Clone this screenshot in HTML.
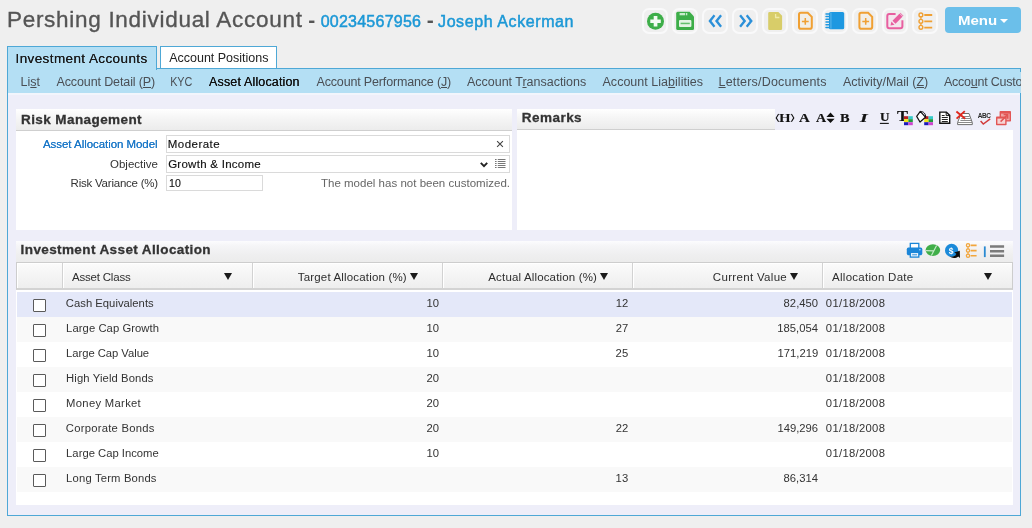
<!DOCTYPE html>
<html lang="en">
<head>
<meta charset="utf-8">
<title>Pershing Individual Account</title>
<style>
*{box-sizing:border-box;margin:0;padding:0}
html,body{width:1032px;height:528px;overflow:hidden}
body{background:#efefef;font-family:"Liberation Sans",sans-serif;font-size:12px;color:#333;position:relative}
.a,.t,svg{position:absolute}
.t{white-space:nowrap}
.t u{text-decoration:underline;text-underline-offset:1px}
.tb{position:absolute;top:7.7px;width:25.6px;height:26px;border:2px solid #f9f9fa;border-radius:7px;margin-left:0.2px}
.hd{background:linear-gradient(#ffffff,#f6f6f6 40%,#ececec);border-bottom:1px solid #cfcfcf}
.inp{border:1px solid #dadada;background:#fff}
.tri{position:absolute;width:0;height:0;border-left:4.5px solid transparent;border-right:4.5px solid transparent;border-top:7.5px solid #1a1a1a}
.cb{position:absolute;left:33px;width:13px;height:13px;border:1px solid #5a5a5a;background:#fff;border-radius:1px}
.sep{position:absolute;top:263px;width:1px;height:25px;background:#d2d2d2;box-shadow:1px 0 0 #fff}
</style>
</head>
<body><div id="wrap" style="position:absolute;left:0;top:0;width:1032px;height:528px;will-change:transform">
<!-- toolbar buttons -->
<div class="tb" style="left:642px"></div><div class="tb" style="left:672px"></div><div class="tb" style="left:702px"></div><div class="tb" style="left:732px"></div><div class="tb" style="left:762px"></div><div class="tb" style="left:792px"></div><div class="tb" style="left:822px"></div><div class="tb" style="left:852px"></div><div class="tb" style="left:882px"></div><div class="tb" style="left:912px"></div>
<div class="a" style="left:945px;top:7px;width:76px;height:26px;background:#6bbfea;border-radius:4px"></div>
<div class="a" style="left:1000px;top:19px;width:0;height:0;border-left:4.2px solid transparent;border-right:4.2px solid transparent;border-top:4.5px solid #fff"></div>

<!-- tabs + nav -->
<div class="a" style="left:7px;top:68px;width:1014px;height:25px;background:#b4dff4;border:1px solid #4ea8d6;border-bottom:0"></div>
<div class="a" style="left:7px;top:46px;width:150px;height:24px;background:#b4dff4;border:1px solid #4ea8d6;border-bottom:0"></div>
<div class="a" style="left:160px;top:46px;width:117px;height:22px;background:#fff;border:1px solid #4ea8d6;border-bottom:0"></div>
<!-- main container -->
<div class="a" style="left:7px;top:93px;width:1014px;height:423px;background:#eeeef9;border:1px solid #4ea8d6;border-top:0"></div>

<!-- Risk Management -->
<div class="a hd" style="left:16px;top:108.6px;width:496px;height:22.4px"></div>
<div class="a" style="left:16px;top:131px;width:496px;height:99px;background:#fff"></div>
<div class="a inp" style="left:166px;top:135px;width:344px;height:18px"></div>
<div class="a inp" style="left:166px;top:155px;width:344px;height:18px"></div>
<div class="a inp" style="left:166px;top:175px;width:97px;height:16px"></div>
<svg style="left:496px;top:140px" width="8" height="8" viewBox="0 0 8 8"><path d="M1.1 1.1L6.9 6.9M6.9 1.1L1.1 6.9" stroke="#444" stroke-width="1.1" fill="none"/></svg>
<svg style="left:480px;top:162px" width="8" height="6" viewBox="0 0 8 6"><path d="M0.8 0.9L4 4.2L7.2 0.9" stroke="#222" stroke-width="1.9" fill="none"/></svg>
<svg style="left:495px;top:159px" width="11" height="9" viewBox="0 0 11 9"><path d="M0 .5h1.6M0 2.5h1.6M0 4.5h1.6M0 6.5h1.6M0 8.5h1.6M2.8 .5H10.5M2.8 2.5H10.5M2.8 4.5H10.5M2.8 6.5H10.5M2.8 8.5H10.5" stroke="#777" stroke-width="1" fill="none"/></svg>

<!-- Remarks -->
<div class="a hd" style="left:517px;top:108.6px;width:258px;height:21.4px"></div>
<div class="a" style="left:517px;top:130px;width:496px;height:100px;background:#fff"></div>

<!-- Investment Asset Allocation -->
<div class="a" style="left:16px;top:241px;width:997px;height:22px;background:linear-gradient(#fcfcfe,#f5f5f7 22%,#efeff0 60%,#ebebeb)"></div>
<div class="a" style="left:16px;top:262px;width:997px;height:243px;background:#fff"></div>
<div class="a" style="left:16px;top:262px;width:997px;height:28px;background:linear-gradient(#fbfbfb,#eeeeee);border:1px solid #cdcdcd;border-bottom:2px solid #d3d3d3;box-shadow:inset 1px 1px 0 #fff"></div>
<div class="sep" style="left:62px"></div><div class="sep" style="left:252px"></div><div class="sep" style="left:442px"></div><div class="sep" style="left:632px"></div><div class="sep" style="left:822px"></div>
<div class="tri" style="left:224px;top:273px"></div><div class="tri" style="left:410px;top:273px"></div><div class="tri" style="left:600px;top:273px"></div><div class="tri" style="left:790px;top:273px"></div><div class="tri" style="left:984px;top:273px"></div>
<!-- rows -->
<div class="a" style="left:17px;top:292px;width:995px;height:25px;background:#e4e8f9"></div>
<div class="a" style="left:17px;top:317px;width:995px;height:25px;background:#f9f9f9"></div>
<div class="a" style="left:17px;top:367px;width:995px;height:25px;background:#f9f9f9"></div>
<div class="a" style="left:17px;top:417px;width:995px;height:25px;background:#f9f9f9"></div>
<div class="a" style="left:17px;top:467px;width:995px;height:25px;background:#f9f9f9"></div>
<div class="cb" style="top:299px"></div><div class="cb" style="top:324px"></div><div class="cb" style="top:349px"></div><div class="cb" style="top:374px"></div><div class="cb" style="top:399px"></div><div class="cb" style="top:424px"></div><div class="cb" style="top:449px"></div><div class="cb" style="top:474px"></div>

<div class="a" style="left:1019px;top:72px;width:2px;height:21px;background:#b4dff4"></div>
<div class="a" style="left:8px;top:93px;width:1012px;height:2px;background:#f2f5fc"></div>
<span id="t1" class="t" style='left:6.94px;top:9px;font:normal 22.5px/1 "Liberation Sans", sans-serif;color:#555;letter-spacing:0.712px;-webkit-text-stroke:0.35px #555'>Pershing Individual Account</span>
<span id="t2" class="t" style='left:308.14px;top:9px;font:bold 21px/1 "Liberation Sans", sans-serif;color:#555;letter-spacing:0.000px;'>-</span>
<span id="t3" class="t" style='left:320.68px;top:14px;font:normal 16px/1 "Liberation Sans", sans-serif;color:#1c98d6;letter-spacing:0.239px;-webkit-text-stroke:0.5px #1c98d6'>00234567956</span>
<span id="t4" class="t" style='left:426.84px;top:9px;font:bold 21px/1 "Liberation Sans", sans-serif;color:#555;letter-spacing:0.000px;'>-</span>
<span id="t5" class="t" style='left:438.05px;top:14px;font:normal 16px/1 "Liberation Sans", sans-serif;color:#1c98d6;letter-spacing:0.586px;-webkit-text-stroke:0.5px #1c98d6'>Joseph Ackerman</span>
<span id="menu" class="t" style='left:957.83px;transform:scaleX(1.1134);transform-origin:0.88px 0;top:14px;font:bold 13.5px/1 "Liberation Sans", sans-serif;color:#fff;letter-spacing:0.000px;'>Menu</span>
<span id="tab1t" class="t" style='left:15.51px;top:52px;font:normal 13.5px/1 "Liberation Sans", sans-serif;color:#1a1a1a;letter-spacing:0.395px;text-shadow:0 0 0.25px #1a1a1a'>Investment Accounts</span>
<span id="tab2t" class="t" style='left:169.20px;top:52px;font:normal 12.5px/1 "Liberation Sans", sans-serif;color:#222;letter-spacing:-0.008px;'>Account Positions</span>
<span id="n1" class="t" style='left:20.50px;top:76px;font:normal 12.5px/1 "Liberation Sans", sans-serif;color:#4a4f55;letter-spacing:0.028px;'>Li<u>s</u>t</span>
<span id="n2" class="t" style='left:56.50px;top:76px;font:normal 12.5px/1 "Liberation Sans", sans-serif;color:#4a4f55;letter-spacing:-0.118px;'>Account Detail (<u>P</u>)</span>
<span id="n3" class="t" style='left:170.00px;transform:scaleX(0.8664);transform-origin:1.00px 0;top:76px;font:normal 12.5px/1 "Liberation Sans", sans-serif;color:#4a4f55;letter-spacing:0.000px;'>KYC</span>
<span id="n4" class="t" style='left:209.00px;top:76px;font:normal 12.5px/1 "Liberation Sans", sans-serif;color:#111;letter-spacing:0.155px;text-shadow:0 0 0.5px #111'>Asset Allocation</span>
<span id="n5" class="t" style='left:316.50px;top:76px;font:normal 12.5px/1 "Liberation Sans", sans-serif;color:#4a4f55;letter-spacing:-0.160px;'>Account Performance (<u>J</u>)</span>
<span id="n6" class="t" style='left:467.00px;top:76px;font:normal 12.5px/1 "Liberation Sans", sans-serif;color:#4a4f55;letter-spacing:-0.016px;'>Account T<u>r</u>ansactions</span>
<span id="n7" class="t" style='left:602.50px;top:76px;font:normal 12.5px/1 "Liberation Sans", sans-serif;color:#4a4f55;letter-spacing:0.021px;'>Account Lia<u>b</u>ilities</span>
<span id="n8" class="t" style='left:718.50px;top:76px;font:normal 12.5px/1 "Liberation Sans", sans-serif;color:#4a4f55;letter-spacing:0.189px;'><u>L</u>etters/Documents</span>
<span id="n9" class="t" style='left:843.00px;top:76px;font:normal 12.5px/1 "Liberation Sans", sans-serif;color:#4a4f55;letter-spacing:-0.012px;'>Activity/Mail (<u>Z</u>)</span>
<span id="n10" class="t" style='left:944.00px;top:76px;font:normal 12.5px/1 "Liberation Sans", sans-serif;color:#4a4f55;letter-spacing:-0.246px;'>Acco<u>u</u>nt Custodian</span>
<span id="h1" class="t" style='left:21.02px;top:113px;font:bold 13.5px/1 "Liberation Sans", sans-serif;color:#333;letter-spacing:0.415px;-webkit-text-stroke:0.3px #333'>Risk Management</span>
<span id="h2" class="t" style='left:521.83px;top:111px;font:bold 13.5px/1 "Liberation Sans", sans-serif;color:#333;letter-spacing:0.457px;-webkit-text-stroke:0.3px #333'>Remarks</span>
<span id="h3" class="t" style='left:20.62px;top:243px;font:bold 13.5px/1 "Liberation Sans", sans-serif;color:#333;letter-spacing:0.392px;-webkit-text-stroke:0.3px #333'>Investment Asset Allocation</span>
<span id="l1" class="t" style='left:43.00px;top:139px;font:normal 11.5px/1 "Liberation Sans", sans-serif;color:#1b78c8;letter-spacing:-0.052px;text-shadow:0 0 0.4px #1b78c8'>Asset Allocation Model</span>
<span id="l2" class="t" style='left:110.00px;top:159px;font:normal 11.5px/1 "Liberation Sans", sans-serif;color:#333;letter-spacing:0.003px;'>Objective</span>
<span id="l3" class="t" style='left:70.56px;top:178px;font:normal 11.5px/1 "Liberation Sans", sans-serif;color:#333;letter-spacing:-0.220px;'>Risk Variance (%)</span>
<span id="v1" class="t" style='left:167.76px;top:139px;font:normal 11.5px/1 "Liberation Sans", sans-serif;color:#111;letter-spacing:0.473px;-webkit-text-stroke:0.15px #111'>Moderate</span>
<span id="v2" class="t" style='left:168.14px;top:159px;font:normal 11.5px/1 "Liberation Sans", sans-serif;color:#111;letter-spacing:0.270px;-webkit-text-stroke:0.15px #111'>Growth &amp; Income</span>
<span id="v3" class="t" style='left:168.82px;transform:scaleX(0.9201);transform-origin:0.88px 0;top:178px;font:normal 11.5px/1 "Liberation Sans", sans-serif;color:#111;letter-spacing:0.000px;-webkit-text-stroke:0.15px #111'>10</span>
<span id="msg" class="t" style='left:320.95px;top:178px;font:normal 11.5px/1 "Liberation Sans", sans-serif;color:#666;letter-spacing:0.014px;'>The model has not been customized.</span>
<span id="g1" class="t" style='left:779.21px;transform:scaleX(1.1062);transform-origin:0.19px 0;top:111px;font:bold 13.5px/1 "Liberation Serif", serif;color:#111;letter-spacing:0.000px;'>H</span>
<span id="g2" class="t" style='left:799.27px;transform:scaleX(1.0980);transform-origin:0.12px 0;top:111px;font:bold 13.5px/1 "Liberation Serif", serif;color:#111;letter-spacing:0.000px;-webkit-text-stroke:0.2px #111'>A</span>
<span id="g3" class="t" style='left:816.08px;transform:scaleX(1.0353);transform-origin:0.12px 0;top:111px;font:bold 13.5px/1 "Liberation Serif", serif;color:#111;letter-spacing:0.000px;-webkit-text-stroke:0.2px #111'>A</span>
<span id="g4" class="t" style='left:839.71px;transform:scaleX(1.0588);transform-origin:0.19px 0;top:111px;font:bold 13.5px/1 "Liberation Serif", serif;color:#111;letter-spacing:0.000px;-webkit-text-stroke:0.2px #111'>B</span>
<span id="g5" class="t" style='left:860.49px;transform:scaleX(1.4468);transform-origin:-0.19px 0;top:111px;font:bold 13.5px/1 "Liberation Serif", serif;color:#111;letter-spacing:0.000px;-webkit-text-stroke:0.2px #111'><i>I</i></span>
<span id="g6" class="t" style='left:879.65px;transform:scaleX(1.1392);transform-origin:0.25px 0;top:112px;font:bold 11.5px/1 "Liberation Serif", serif;color:#111;letter-spacing:0.000px;-webkit-text-stroke:0.2px #111'>U</span>
<span id="g7" class="t" style='left:896.81px;transform:scaleX(1.1383);transform-origin:0.19px 0;top:109px;font:bold 14.5px/1 "Liberation Serif", serif;color:#111;letter-spacing:0.000px;-webkit-text-stroke:0.2px #111'>T</span>
<span id="g8" class="t" style='left:977.77px;top:113px;font:bold 6.5px/1 "Liberation Sans", sans-serif;color:#2a2a2a;letter-spacing:-0.463px;'>ABC</span>
<span id="c1" class="t" style='left:72.00px;top:272px;font:normal 11.5px/1 "Liberation Sans", sans-serif;color:#2e2e2e;letter-spacing:-0.204px;'>Asset Class</span>
<span id="c2" class="t" style='left:297.75px;top:272px;font:normal 11.5px/1 "Liberation Sans", sans-serif;color:#2e2e2e;letter-spacing:0.173px;'>Target Allocation (%)</span>
<span id="c3" class="t" style='left:488.30px;top:272px;font:normal 11.5px/1 "Liberation Sans", sans-serif;color:#2e2e2e;letter-spacing:0.155px;'>Actual Allocation (%)</span>
<span id="c4" class="t" style='left:712.84px;top:272px;font:normal 11.5px/1 "Liberation Sans", sans-serif;color:#2e2e2e;letter-spacing:0.318px;'>Current Value</span>
<span id="c5" class="t" style='left:832.10px;top:272px;font:normal 11.5px/1 "Liberation Sans", sans-serif;color:#2e2e2e;letter-spacing:0.265px;'>Allocation Date</span>
<span id="r0a" class="t" style='left:65.84px;top:298px;font:normal 11.25px/1 "Liberation Sans", sans-serif;color:#333;letter-spacing:0.019px;'>Cash Equivalents</span>
<span id="r0b" class="t" style='left:426.45px;top:298px;font:normal 11.25px/1 "Liberation Sans", sans-serif;color:#333;letter-spacing:0.014px;'>10</span>
<span id="r0c" class="t" style='left:615.68px;top:298px;font:normal 11.25px/1 "Liberation Sans", sans-serif;color:#333;letter-spacing:0.014px;'>12</span>
<span id="r0d" class="t" style='left:783.60px;top:298px;font:normal 11.25px/1 "Liberation Sans", sans-serif;color:#333;letter-spacing:0.014px;'>82,450</span>
<span id="r0e" class="t" style='left:825.86px;top:298px;font:normal 11.25px/1 "Liberation Sans", sans-serif;color:#333;letter-spacing:0.309px;'>01/18/2008</span>
<span id="r1a" class="t" style='left:66.12px;top:323px;font:normal 11.25px/1 "Liberation Sans", sans-serif;color:#333;letter-spacing:0.063px;'>Large Cap Growth</span>
<span id="r1b" class="t" style='left:426.45px;top:323px;font:normal 11.25px/1 "Liberation Sans", sans-serif;color:#333;letter-spacing:0.014px;'>10</span>
<span id="r1c" class="t" style='left:615.68px;top:323px;font:normal 11.25px/1 "Liberation Sans", sans-serif;color:#333;letter-spacing:0.014px;'>27</span>
<span id="r1d" class="t" style='left:777.27px;top:323px;font:normal 11.25px/1 "Liberation Sans", sans-serif;color:#333;letter-spacing:0.014px;'>185,054</span>
<span id="r1e" class="t" style='left:825.86px;top:323px;font:normal 11.25px/1 "Liberation Sans", sans-serif;color:#333;letter-spacing:0.309px;'>01/18/2008</span>
<span id="r2a" class="t" style='left:66.12px;top:348px;font:normal 11.25px/1 "Liberation Sans", sans-serif;color:#333;letter-spacing:-0.042px;'>Large Cap Value</span>
<span id="r2b" class="t" style='left:426.45px;top:348px;font:normal 11.25px/1 "Liberation Sans", sans-serif;color:#333;letter-spacing:0.014px;'>10</span>
<span id="r2c" class="t" style='left:615.62px;top:348px;font:normal 11.25px/1 "Liberation Sans", sans-serif;color:#333;letter-spacing:0.014px;'>25</span>
<span id="r2d" class="t" style='left:777.45px;top:348px;font:normal 11.25px/1 "Liberation Sans", sans-serif;color:#333;letter-spacing:0.014px;'>171,219</span>
<span id="r2e" class="t" style='left:825.86px;top:348px;font:normal 11.25px/1 "Liberation Sans", sans-serif;color:#333;letter-spacing:0.309px;'>01/18/2008</span>
<span id="r3a" class="t" style='left:66.12px;top:373px;font:normal 11.25px/1 "Liberation Sans", sans-serif;color:#333;letter-spacing:0.111px;'>High Yield Bonds</span>
<span id="r3b" class="t" style='left:426.45px;top:373px;font:normal 11.25px/1 "Liberation Sans", sans-serif;color:#333;letter-spacing:0.014px;'>20</span>
<span id="r3e" class="t" style='left:825.86px;top:373px;font:normal 11.25px/1 "Liberation Sans", sans-serif;color:#333;letter-spacing:0.309px;'>01/18/2008</span>
<span id="r4a" class="t" style='left:66.12px;top:398px;font:normal 11.25px/1 "Liberation Sans", sans-serif;color:#333;letter-spacing:0.306px;'>Money Market</span>
<span id="r4b" class="t" style='left:426.45px;top:398px;font:normal 11.25px/1 "Liberation Sans", sans-serif;color:#333;letter-spacing:0.014px;'>20</span>
<span id="r4e" class="t" style='left:825.86px;top:398px;font:normal 11.25px/1 "Liberation Sans", sans-serif;color:#333;letter-spacing:0.309px;'>01/18/2008</span>
<span id="r5a" class="t" style='left:65.84px;top:423px;font:normal 11.25px/1 "Liberation Sans", sans-serif;color:#333;letter-spacing:0.242px;'>Corporate Bonds</span>
<span id="r5b" class="t" style='left:426.45px;top:423px;font:normal 11.25px/1 "Liberation Sans", sans-serif;color:#333;letter-spacing:0.014px;'>20</span>
<span id="r5c" class="t" style='left:615.68px;top:423px;font:normal 11.25px/1 "Liberation Sans", sans-serif;color:#333;letter-spacing:0.014px;'>22</span>
<span id="r5d" class="t" style='left:777.39px;top:423px;font:normal 11.25px/1 "Liberation Sans", sans-serif;color:#333;letter-spacing:0.014px;'>149,296</span>
<span id="r5e" class="t" style='left:825.86px;top:423px;font:normal 11.25px/1 "Liberation Sans", sans-serif;color:#333;letter-spacing:0.309px;'>01/18/2008</span>
<span id="r6a" class="t" style='left:66.12px;top:448px;font:normal 11.25px/1 "Liberation Sans", sans-serif;color:#333;letter-spacing:0.004px;'>Large Cap Income</span>
<span id="r6b" class="t" style='left:426.45px;top:448px;font:normal 11.25px/1 "Liberation Sans", sans-serif;color:#333;letter-spacing:0.014px;'>10</span>
<span id="r6e" class="t" style='left:825.86px;top:448px;font:normal 11.25px/1 "Liberation Sans", sans-serif;color:#333;letter-spacing:0.309px;'>01/18/2008</span>
<span id="r7a" class="t" style='left:66.12px;top:473px;font:normal 11.25px/1 "Liberation Sans", sans-serif;color:#333;letter-spacing:0.170px;'>Long Term Bonds</span>
<span id="r7c" class="t" style='left:615.62px;top:473px;font:normal 11.25px/1 "Liberation Sans", sans-serif;color:#333;letter-spacing:0.014px;'>13</span>
<span id="r7d" class="t" style='left:783.54px;top:473px;font:normal 11.25px/1 "Liberation Sans", sans-serif;color:#333;letter-spacing:0.014px;'>86,314</span>
<!-- right clip for nav overflow -->
<div class="a" style="left:1021px;top:60px;width:11px;height:40px;background:#efefef"></div>
<svg style="left:0;top:0" width="1032" height="528" viewBox="0 0 1032 528">
<!-- 1 plus circle -->
<circle cx="655.5" cy="21.2" r="8.5" fill="#3dae49"/>
<path d="M650.3 19.4h3.4v-3.3h3.7v3.3h3.4v3.7h-3.4v3.4h-3.7v-3.4h-3.4z" fill="#f3fbf3"/>
<!-- 2 floppy -->
<path d="M677.7 11.8H689.6L694 16.4V28.5a1.5 1.5 0 0 1-1.5 1.5H677.7a1.5 1.5 0 0 1-1.5-1.5V13.3a1.5 1.5 0 0 1 1.5-1.5z" fill="#3dae49"/>
<rect x="679" y="20" width="12.4" height="6.9" rx="1" fill="#e3f4e4"/>
<rect x="680.6" y="22.7" width="9.2" height="1.5" fill="#63bf6c"/>
<rect x="679.6" y="13" width="5.6" height="2.3" fill="#c9ebcc"/><rect x="686" y="13" width="1.3" height="2.3" fill="#c9ebcc"/>
<!-- 3,4 chevrons -->
<path d="M713.6 14.4L708.4 21L713.6 27.6L715.4 25.9L711.5 21L715.4 16.1ZM720.2 14.4L715.0 21L720.2 27.6L722.0 25.9L718.1 21L722.0 16.1ZM741.0 14.4L746.2 21L741.0 27.6L739.2 25.9L743.1 21L739.2 16.1ZM747.6 14.4L752.8 21L747.6 27.6L745.8 25.9L749.7 21L745.8 16.1Z" fill="#2b90d9"/>
<!-- 5 yellow file -->
<path d="M769.5 12H778.4L782.1 15.8V28.7a1.3 1.3 0 0 1-1.3 1.3H769.5a1.3 1.3 0 0 1-1.3-1.3V13.3a1.3 1.3 0 0 1 1.3-1.3z" fill="#d8cd69"/>
<path d="M775.6 14V17.5H779.4" fill="none" stroke="#f0eaa8" stroke-width="1.3"/>
<!-- 6,8 orange file plus -->
<g id="fp" fill="none" stroke="#f0a033">
<path d="M800.8 12.8H807.7L811.8 16.9V26.9a1.8 1.8 0 0 1-1.8 1.8H800.8a1.8 1.8 0 0 1-1.8-1.8V14.6a1.8 1.8 0 0 1 1.8-1.8z" stroke-width="2" fill="#f2eee6"/>
<path d="M801.9 21.4H808.7M805.3 18V24.8" stroke-width="1.5"/>
<path d="M805.3 19.9l1.5 1.5l-1.5 1.5l-1.5-1.5z" fill="#f0a033" stroke="none"/>
</g>
<use href="#fp" x="60.4" y="0"/>
<!-- 7 notebook -->
<rect x="829" y="11.9" width="15.2" height="17.4" rx="1.5" fill="#1e98e1"/>
<path d="M826 13.9h4M826 16.6h4M826 19.3h4M826 22h4M826 24.7h4M826 27.4h4" stroke="#1e98e1" stroke-width="1.5" stroke-linecap="round"/>
<rect x="830.6" y="12.5" width="0.7" height="16.2" fill="#7cc4ee"/>
<!-- 9 pink edit -->
<path d="M895.6 14H889.3a2 2 0 0 0-2 2V26.3a2 2 0 0 0 2 2H900.4a2 2 0 0 0 2-2V20.2" fill="#f4e6ee" stroke="#e85fa0" stroke-width="2"/>
<path d="M894 22.2L901.9 14.3" stroke="#e85fa0" stroke-width="4.3" fill="none"/>
<path d="M890.5 25.6L891.4 21.6L894.5 24.7z" fill="#e85fa0"/>
<path d="M899.2 12.9L903.3 17" stroke="#eeeeee" stroke-width="0.8" fill="none"/>
<!-- 10 orange tree -->
<g fill="none" stroke="#f0a033" stroke-width="1.4">
<circle cx="920.9" cy="14.9" r="1.9"/><circle cx="920.9" cy="21.3" r="1.9"/><circle cx="920.9" cy="27.3" r="1.9"/>
<path d="M920.9 16.8V19.4M920.9 23.2V25.4" stroke-width="1.2"/>
<path d="M924.3 15H932.2M924.3 21.3H932.2M924.3 27.6H932.2" stroke-width="1.8"/>
</g>

<!-- Remarks toolbar -->
<g fill="none" stroke="#111" stroke-width="1.1">
<polyline points="778.6,114 776.2,117.9 778.6,121.8"/><polyline points="791.4,114 793.8,117.9 791.4,121.8"/>
</g>
<!-- A size arrows -->
<path d="M830.5 112.6L834.6 116.9H826.4z M830.5 123L834.6 118.7H826.4z" fill="#111"/>
<!-- color grids -->
<g id="cg"><rect x="904" y="116.2" width="4.4" height="3" fill="#b82222"/><rect x="908.4" y="116.2" width="4.4" height="3" fill="#35c9c9"/><rect x="904" y="119.2" width="4.4" height="3" fill="#f2e41c"/><rect x="908.4" y="119.2" width="4.4" height="3" fill="#1f9a3c"/><rect x="904" y="122.2" width="4.4" height="3" fill="#1c1cb8"/><rect x="908.4" y="122.2" width="4.4" height="3" fill="#cf45cf"/></g>
<use href="#cg" x="20.2" y="0"/>
<!-- bucket -->
<path d="M920.3 111.4L925.4 117.2L920 122L916.7 116.4z" fill="#fff" stroke="#111" stroke-width="1.2" stroke-linejoin="round"/>
<path d="M920.6 111.6C923.4 111.2 925.8 113.8 925.7 117.2" fill="none" stroke="#111" stroke-width="1"/>
<!-- doc -->
<path d="M939.8 112.1H946.4L949.7 115.4V123.2H939.8z" fill="#fff" stroke="#111" stroke-width="1.4"/>
<path d="M946.2 112.1V115.6H949.7" fill="none" stroke="#111" stroke-width="1"/>
<path d="M941.8 115.5H944.6M941.8 117.5H947.8M941.8 119.5H947.8M941.8 121.5H947.8" stroke="#222" stroke-width="1"/>
<!-- red-x doc -->
<path d="M961 113.5H969L972.3 122.6V124.6H957.6V122.6z" fill="#fff" stroke="#6e6e6e" stroke-width="1"/>
<path d="M962 116.5H969.6M961.2 118.5H970.3M960.4 120.5H971M957.8 122.5H972.2" stroke="#8a8a8a" stroke-width="1"/>
<path d="M956.4 111.4L965.2 118.8M964.8 111.1L956.6 118.6" stroke="#e0281e" stroke-width="1.9"/>
<!-- abc check -->
<path d="M980.6 120.9L983.3 124L990.2 118.9" fill="none" stroke="#d23c3c" stroke-width="1.5"/>
<!-- red popup -->
<rect x="999.6" y="111" width="11.4" height="10.6" rx="0.8" fill="#e25555"/>
<rect x="1001" y="113.6" width="8.6" height="6.6" fill="#f0a4a4"/>
<rect x="996" y="116.4" width="10.6" height="8.8" rx="0.8" fill="#e25555"/>
<rect x="997.4" y="118.6" width="7.8" height="5.2" fill="#f6d4d4"/>
<path d="M1000.6 121.6L1007.4 114.9M1003.6 114.6H1007.7V118.7" stroke="#e25555" stroke-width="1.5" fill="none"/>

<!-- IAA toolbar -->
<rect x="910.3" y="243.4" width="8.5" height="5.5" fill="#fff" stroke="#1b86d8" stroke-width="1.3"/>
<rect x="906.8" y="247.6" width="15.5" height="7.6" rx="1.6" fill="#1b86d8"/>
<rect x="910.3" y="252.4" width="8.5" height="4.7" fill="#e8f3fc" stroke="#1b86d8" stroke-width="1.3"/>
<path d="M912.2 254.8H917" stroke="#1b86d8" stroke-width="0.9"/>
<circle cx="919.9" cy="249.7" r="0.7" fill="#cfe6f8"/>
<!-- pie -->
<ellipse cx="932.9" cy="250.1" rx="7.3" ry="5.8" fill="#40ae49"/>
<path d="M931.4 255.6L936.6 245.4M926 250.6L933.9 250.9" stroke="#c4e8c6" stroke-width="1.2" fill="none"/>
<!-- dollar -->
<circle cx="951.6" cy="250.4" r="6.6" fill="#1b8ad9"/>
<path d="M949.6 256.6C953 257.2 955.4 256 956.4 253.8L954.2 252.6L959.8 250.8L960 258L958.2 256.4C956 258.4 952.4 258.6 949.6 256.6z" fill="#0b0b0b"/>
<!-- tree -->
<g fill="none" stroke="#f2a63c" stroke-width="1.3">
<circle cx="968" cy="245.3" r="1.6"/><circle cx="968" cy="250.5" r="1.6"/><circle cx="968" cy="255.7" r="1.6"/>
<path d="M968 246.9V248.9M968 252.1V254.1" stroke-width="1.1"/>
<path d="M970.6 245.4H976.6M970.6 250.6H976.6M970.6 255.8H976.6" stroke-width="1.6"/>
</g>
<rect x="983.9" y="246.4" width="1.8" height="10.7" fill="#2a8ad2"/>
<path d="M990 246.5H1004.1M990 251.15H1004.1M990 255.8H1004.1" stroke="#7b7b7b" stroke-width="2.5"/>
<path d="M879.9 123.4H888.8" stroke="#111" stroke-width="1.1"/>
<text x="948.8" y="253.6" font-family="Liberation Sans, sans-serif" font-weight="bold" font-size="8.5" fill="#fff">$</text>
</svg>

</div></body>
</html>
